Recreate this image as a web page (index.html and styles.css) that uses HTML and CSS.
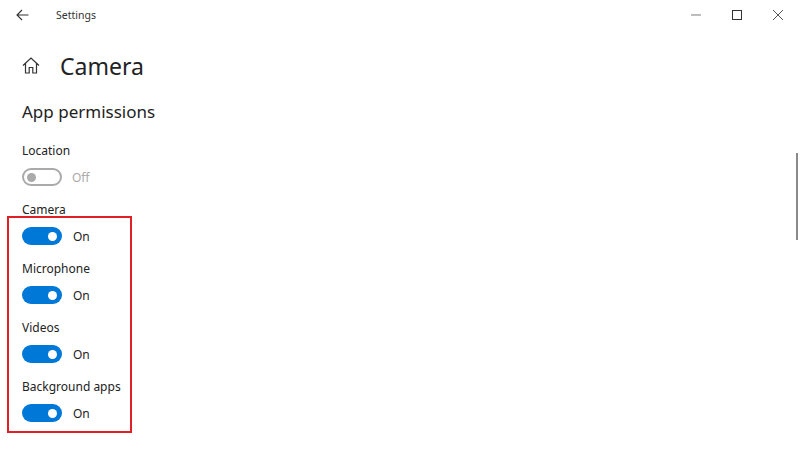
FILE: index.html
```html
<!DOCTYPE html>
<html lang="en">
<head>
<meta charset="utf-8">
<title>Settings</title>
<link rel="stylesheet" href="styles.css">
</head>
<body>
<div class="window">
  <header class="titlebar">
    <svg class="back" width="13" height="12" viewBox="0 0 13 12"><path d="M12.500 6H1M6 1 1 6l5 5" fill="none" stroke="#333" stroke-width="1.100"/></svg>
    <span class="app-name">Settings</span>
    <div class="controls">
      <svg width="10" height="10" viewBox="0 0 10 10"><path d="M0 5h10" stroke="#999" stroke-width="1.300"/></svg>
      <svg width="10" height="10" viewBox="0 0 10 10"><rect x=".5" y=".5" width="9" height="9" fill="none" stroke="#333" stroke-width="1"/></svg>
      <svg width="10" height="10" viewBox="0 0 10 10"><path d="M0 0l10 10M10 0 0 10" stroke="#555" stroke-width="1"/></svg>
    </div>
  </header>
  <main class="content">
    <div class="page-head">
      <svg class="home" width="18" height="17" viewBox="0 0 18 17"><path d="M1 8.500 9 1l8 7.500M3.500 6.500V16h3.700v-5.500h3.600V16h3.700V6.500" fill="none" stroke="#333" stroke-width="1.200"/></svg>
      <h1>Camera</h1>
    </div>
    <h2>App permissions</h2>
    <div class="setting">
      <div class="label">Location</div>
      <div class="toggle-row off"><span class="toggle"><i></i></span><span>Off</span></div>
    </div>
    <div class="setting">
      <div class="label">Camera</div>
      <div class="toggle-row"><span class="toggle"><i></i></span><span>On</span></div>
    </div>
    <div class="setting">
      <div class="label">Microphone</div>
      <div class="toggle-row"><span class="toggle"><i></i></span><span>On</span></div>
    </div>
    <div class="setting">
      <div class="label">Videos</div>
      <div class="toggle-row"><span class="toggle"><i></i></span><span>On</span></div>
    </div>
    <div class="setting">
      <div class="label">Background apps</div>
      <div class="toggle-row"><span class="toggle"><i></i></span><span>On</span></div>
    </div>
  </main>
  <div class="highlight"></div>
  <div class="scrollbar"></div>
</div>
</body>
</html>
```
FILE: styles.css
```css
* { box-sizing: border-box; }
html, body { margin: 0; height: 100%; }
body { background: #fff; color: #222; font-family: "Noto Sans", "Open Sans", sans-serif; overflow: hidden; }
.window { position: relative; width: 800px; height: 449px; overflow: hidden; }
.titlebar { display: flex; align-items: center; height: 30px; padding-left: 16px; }
.back { flex: none; margin-top: -1px; }
.app-name { margin-left: 27px; font-size: 10.5px; color: #333; }
.controls { display: flex; gap: 31px; margin-left: auto; margin-right: 17px; }
.content { padding: 0 0 0 22px; }
.page-head { display: flex; align-items: center; gap: 20px; margin-top: 19px; height: 34px; }
.home { flex: none; margin-top: -2px; }
h1 { margin: 0; font-size: 23px; font-weight: 400; line-height: 34px; color: #222; }
h2 { margin: 16px 0 17px; font-size: 17px; font-weight: 400; line-height: 26px; color: #222; }
.setting { height: 59px; }
.label { height: 18px; margin-bottom: 9px; font-size: 12px; line-height: 18px; color: #222; }
.toggle-row { display: flex; align-items: center; gap: 11px; height: 18px; font-size: 12px; line-height: 18px; color: #222; }
.toggle { display: flex; align-items: center; justify-content: flex-end; flex: none; width: 40px; height: 18px; margin-top: -2px; padding: 0 5px; border-radius: 9px; background: #0078d7; }
.toggle i { display: block; width: 9px; height: 9px; border-radius: 50%; background: #fff; }
.off { gap: 10px; color: #aaa; }
.off .toggle { justify-content: flex-start; background: #fff; border: 2px solid #aaa; padding: 0 3px; }
.off .toggle i { background: #aaa; }
.highlight { position: absolute; left: 7px; top: 216px; width: 125px; height: 217px; border: 2px solid #e01f26; }
.scrollbar { position: absolute; left: 796px; top: 153px; width: 2px; height: 87px; background: #8a8a8a; }
```
